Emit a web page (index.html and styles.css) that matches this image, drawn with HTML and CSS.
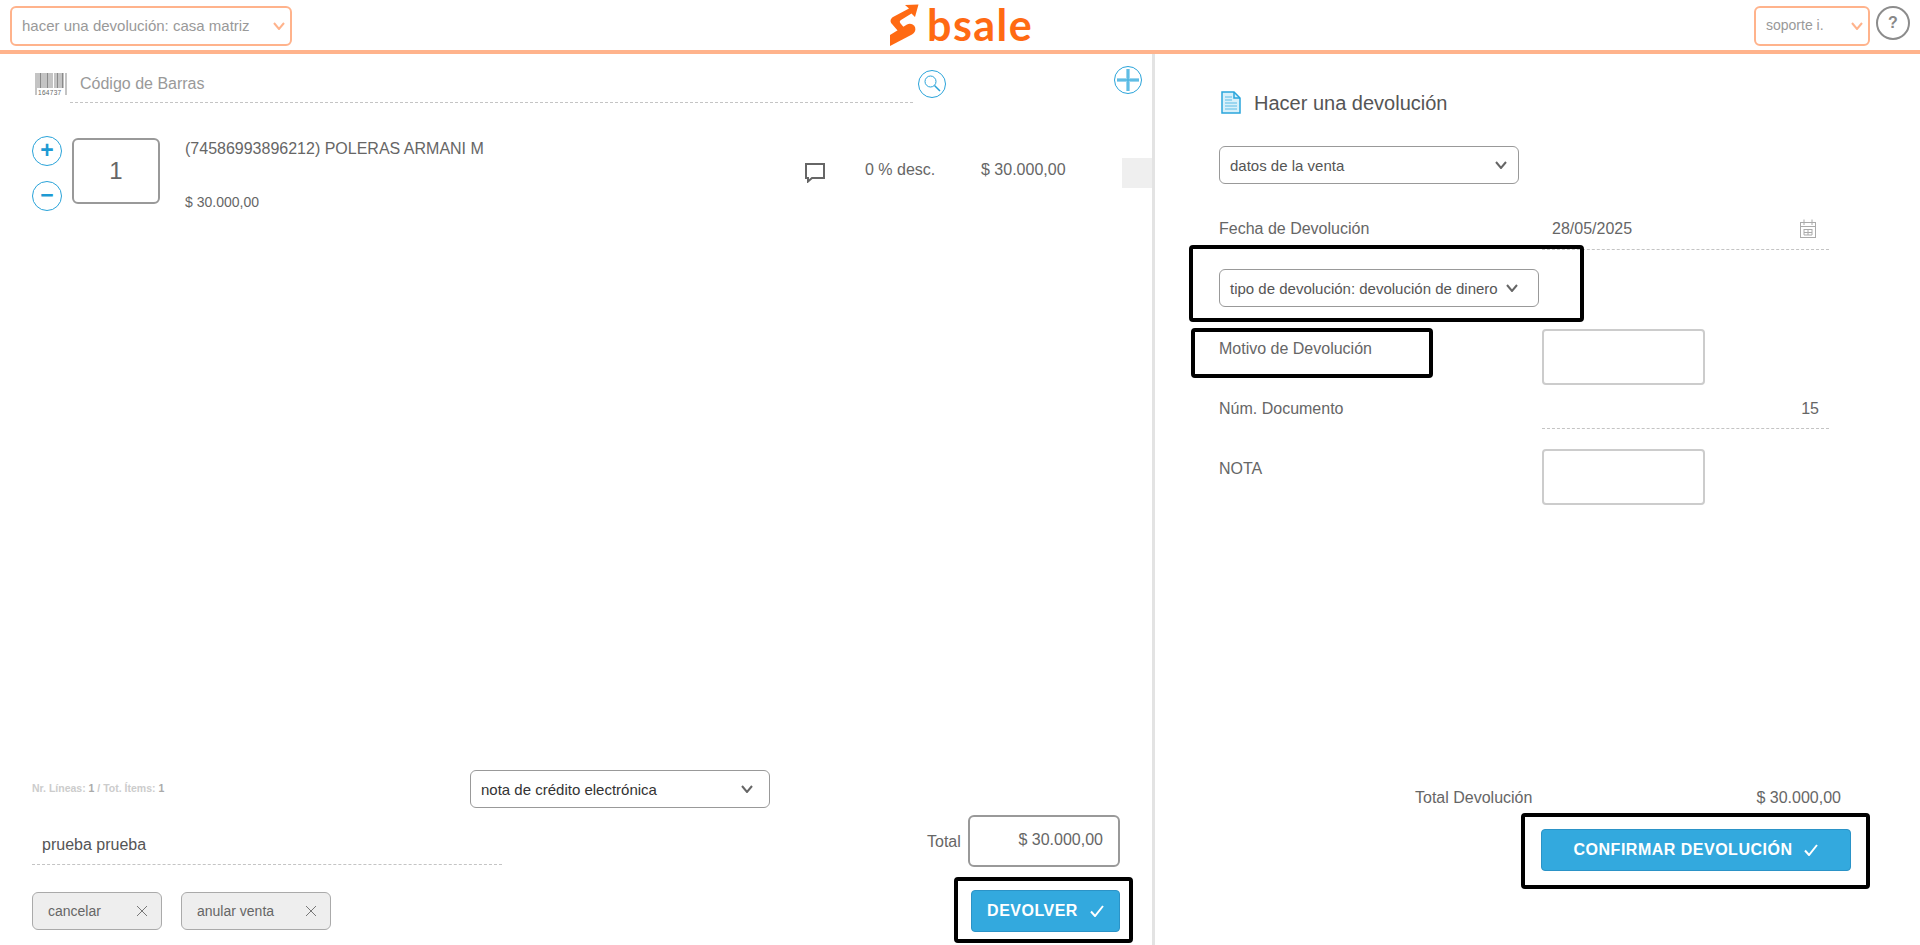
FILE: index.html
```html
<!DOCTYPE html>
<html lang="es">
<head>
<meta charset="utf-8">
<title>Hacer una devolución</title>
<link rel="stylesheet" href="styles.css">
</head>
<body>
<div class="app">
  <header class="topbar">
    <div class="pick pick-branch">
      <span class="pick-text">hacer una devolución: casa matriz</span>
      <svg class="chev" width="12" height="8" viewBox="0 0 12 8"><polyline points="1,1 6,7 11,1"/></svg>
    </div>
    <div class="logo">
      <svg class="logo-mark" width="29" height="42" viewBox="0 0 29 42"><path d="M15 1L28.5 .5 25 13 21.5 9.5 11 16C9 17 10 19 11 20L14 23.5 8 27 2 20C0 18 0 15 3 13L19 4.5Z"/><path d="M0 31L17 20.5C20 19 23 20 25 23C26 26 25 28.500 22 30.500L0 42Z"/></svg>
      <span class="logo-word">bsale</span>
    </div>
    <div class="top-right">
      <div class="pick pick-user">
        <span class="pick-text">soporte i.</span>
        <svg class="chev" width="12" height="8" viewBox="0 0 12 8"><polyline points="1,1 6,7 11,1"/></svg>
      </div>
      <div class="help">?</div>
    </div>
  </header>

  <main class="panes">
    <section class="left">
      <div class="scan">
        <svg class="barcode" width="31" height="22" viewBox="0 0 31 22">
          <g class="bars"><rect x="0" width="1" height="22"/><rect x="2" width="1" height="15"/><rect x="4" width="2" height="15"/><rect x="7" width="1" height="15"/><rect x="9" width="1" height="15"/><rect x="11" width="2" height="15"/><rect x="14" width="1" height="15"/><rect x="16" width="1" height="15"/><rect x="19" width="1" height="15"/><rect x="21" width="2" height="15"/><rect x="24" width="1" height="15"/><rect x="26" width="2" height="15"/><rect x="30" width="1" height="22"/></g>
          <text class="bar-num" x="2.500" y="21.500">164737</text>
        </svg>
        <div class="scan-field">Código de Barras</div>
        <svg class="icon-search" width="28" height="28" viewBox="0 0 28 28"><circle cx="14" cy="14" r="13.500"/><circle cx="12.500" cy="11.500" r="5.500"/><line x1="16.500" y1="15.500" x2="22" y2="21"/></svg>
        <svg class="icon-add" width="28" height="28" viewBox="0 0 28 28"><circle cx="14" cy="14" r="13.500"/><line class="glow" x1="3" y1="14" x2="25" y2="14"/><line class="glow" x1="14" y1="3" x2="14" y2="25"/><line x1="3" y1="14" x2="25" y2="14"/><line x1="14" y1="3" x2="14" y2="25"/></svg>
      </div>

      <div class="item">
        <div class="steppers">
          <div class="step">+</div>
          <div class="step">−</div>
        </div>
        <div class="qty">1</div>
        <div class="item-info">
          <div class="item-name">(74586993896212) POLERAS ARMANI M</div>
          <div class="item-price">$ 30.000,00</div>
        </div>
        <svg class="icon-note" width="20" height="20" viewBox="0 0 20 20"><path d="M1 1H19V15H7L3 18.500V15H1Z"/></svg>
        <div class="item-disc">0 % desc.</div>
        <div class="item-amount">$ 30.000,00</div>
        <div class="item-tail"></div>
      </div>

      <div class="left-foot">
        <div class="foot-row">
          <div class="meta">Nr. Líneas: <b>1</b> / Tot. Ítems: <b>1</b></div>
          <div class="sel sel-doc">
            <span>nota de crédito electrónica</span>
            <svg class="chev chev-dark" width="12" height="8" viewBox="0 0 12 8"><polyline points="1,1 6,7 11,1"/></svg>
          </div>
        </div>
        <div class="foot-row row-total">
          <div class="note-cell"><div class="note-field">prueba prueba</div></div>
          <div class="total-label">Total</div>
          <div class="total-box">$ 30.000,00</div>
        </div>
        <div class="foot-row row-actions">
          <div class="ghost ghost-cancel"><span>cancelar</span><svg class="icon-x" width="10" height="10" viewBox="0 0 10 10"><path d="M0 0L10 10M10 0L0 10"/></svg></div>
          <div class="ghost ghost-void"><span>anular venta</span><svg class="icon-x" width="10" height="10" viewBox="0 0 10 10"><path d="M0 0L10 10M10 0L0 10"/></svg></div>
          <div class="primary primary-return">DEVOLVER<svg class="icon-check" width="14" height="12" viewBox="0 0 14 12"><polyline points="1,6.500 5,11 13,1"/></svg></div>
        </div>
      </div>
    </section>

    <section class="right">
      <div class="title-row">
        <svg class="icon-doc" width="20" height="23" viewBox="0 0 20 23"><path class="doc-sheet" d="M1 1H13L19 7V22H1Z"/><path class="doc-fold" d="M13 1V7H19"/><path class="doc-lines" d="M4 6H11M4 9H11M4 12H16M4 15H16M4 18H16"/></svg>
        <h1 class="title">Hacer una devolución</h1>
      </div>
      <div class="sel sel-data">
        <span>datos de la venta</span>
        <svg class="chev chev-dark" width="12" height="8" viewBox="0 0 12 8"><polyline points="1,1 6,7 11,1"/></svg>
      </div>
      <div class="field field-date">
        <div class="field-label">Fecha de Devolución</div>
        <div class="field-value value-date">
          <span>28/05/2025</span>
          <svg class="icon-cal" width="16" height="19" viewBox="0 0 16 19"><rect x=".5" y="3.500" width="15" height="15"/><path d="M4 .5V6M12 .5V6M.5 7.500H15.500M4 10.500H12M4 13.500H12M4 10V16H12V10M8 10V16"/></svg>
        </div>
      </div>
      <div class="sel sel-type">
        <span>tipo de devolución: devolución de dinero</span>
        <svg class="chev chev-dark" width="12" height="8" viewBox="0 0 12 8"><polyline points="1,1 6,7 11,1"/></svg>
      </div>
      <div class="field field-box">
        <div class="field-label">Motivo de Devolución</div>
        <div class="text-box"></div>
      </div>
      <div class="field field-num">
        <div class="field-label">Núm. Documento</div>
        <div class="field-value value-num">15</div>
      </div>
      <div class="field field-box field-nota">
        <div class="field-label">NOTA</div>
        <div class="text-box"></div>
      </div>
      <div class="right-foot">
        <div class="sum-row"><span>Total Devolución</span><span>$ 30.000,00</span></div>
        <div class="primary primary-confirm">CONFIRMAR DEVOLUCIÓN<svg class="icon-check" width="14" height="12" viewBox="0 0 14 12"><polyline points="1,6.500 5,11 13,1"/></svg></div>
      </div>
    </section>
  </main>

  <div class="mark mark-type"></div>
  <div class="mark mark-reason"></div>
  <div class="mark mark-return"></div>
  <div class="mark mark-confirm"></div>
</div>
</body>
</html>
```

FILE: styles.css
```css
* { box-sizing: border-box; }
html, body { margin: 0; padding: 0; }
body {
  font-family: "Liberation Sans", Arial, sans-serif;
  font-size: 16px;
  color: #666;
  background: #fff;
}
.app { position: relative; width: 1920px; height: 945px; overflow: hidden; }

/* top bar */
.topbar {
  position: relative;
  height: 54px;
  border-bottom: 4px solid #ffb38c;
  display: flex;
  align-items: flex-start;
  justify-content: space-between;
  padding: 6px 10px 0;
}
.pick {
  height: 40px;
  border: 2px solid #ffb38c;
  border-radius: 6px;
  display: flex;
  align-items: center;
  justify-content: space-between;
  font-size: 15px;
  color: #999;
  padding: 0 5px 0 10px;
}
.pick-text { position: relative; top: -1px; }
.pick-branch { width: 282px; }
.pick-user { width: 116px; font-size: 14px; }
.chev { fill: none; stroke: #ffb38c; stroke-width: 2; flex: none; }
.chev-dark { stroke: #666; }
.top-right { display: flex; gap: 6px; }
.help {
  width: 34px;
  height: 34px;
  border: 2px solid #8c8c8c;
  border-radius: 50%;
  text-align: center;
  line-height: 29px;
  font-size: 16px;
  font-weight: bold;
  color: #888;
}
.logo { position: absolute; left: 890px; top: 4px; display: flex; align-items: flex-start; }
.logo-mark { fill: #ff6a13; }
.logo-word {
  margin-left: 8px;
  font-family: "Lato", sans-serif;
  font-weight: 700;
  font-size: 43px;
  line-height: 42px;
  letter-spacing: 1.5px;
  color: #ff6a13;
}

/* panes */
.panes { display: flex; height: 891px; }
.left {
  width: 1155px;
  border-right: 3px solid #e3e3e3;
  display: flex;
  flex-direction: column;
}
.right { flex: 1; display: flex; flex-direction: column; padding-left: 64px; }

/* scan row */
.scan { display: flex; align-items: flex-start; padding: 12px 10px 0 35px; }
.barcode { margin-top: 7px; flex: none; width: 32px; }
.bars { fill: #8a8a8a; }
.bar-num { font-size: 6.500px; fill: #666; letter-spacing: .3px; }
.scan-field {
  margin-left: 3px;
  width: 843px;
  height: 37px;
  border-bottom: 1px dashed #c4c4c4;
  padding: 8px 0 0 10px;
  line-height: 20px;
  color: #999;
}
.icon-search, .icon-add { flex: none; fill: none; stroke: #29a3d9; stroke-width: 1; }
.icon-search { margin: 4px 0 0 5px; }
.icon-search line { stroke-width: 1.5; }
.icon-add { margin-left: auto; }
.icon-add .glow { stroke: #9dd6ef; stroke-width: 4; }
.icon-add line { stroke: #4cb5e0; stroke-width: 1.5; }

/* item row */
.item { display: flex; align-items: flex-start; margin-top: 33px; padding-left: 32px; }
.steppers { display: flex; flex-direction: column; gap: 15px; }
.step {
  width: 30px;
  height: 30px;
  border: 1px solid #29a3d9;
  border-radius: 50%;
  text-align: center;
  font-size: 23px;
  font-weight: bold;
  line-height: 26px;
  color: #1e9ad3;
}
.qty {
  margin: 2px 0 0 10px;
  width: 88px;
  height: 66px;
  border: 2px solid #999;
  border-radius: 6px;
  text-align: center;
  font-size: 24px;
  line-height: 62px;
  color: #666;
}
.item-info { margin-left: 25px; width: 620px; flex: none; }
.item-name { margin-top: 4px; line-height: 18px; }
.item-price { margin-top: 35px; font-size: 14px; line-height: 18px; }
.icon-note { margin-top: 27px; flex: none; fill: none; stroke: #666; stroke-width: 2; }
.item-disc { margin: 25px 0 0 40px; width: 115px; flex: none; line-height: 18px; }
.item-amount { margin-top: 25px; width: 142px; flex: none; line-height: 18px; padding-left: 1px; }
.item-tail { margin-top: 22px; width: 30px; height: 30px; background: #efefef; flex: none; }

/* left footer */
.left-foot { margin-top: auto; padding: 0 32px 13px; }
.foot-row { display: flex; align-items: flex-start; }
.meta { width: 438px; padding-top: 12px; font-size: 10.5px; line-height: 12px; font-weight: bold; color: #ccc; }
.meta b { color: #aaa; }
.sel {
  height: 38px;
  border: 1px solid #999;
  border-radius: 6px;
  display: flex;
  align-items: center;
  justify-content: space-between;
  padding: 0 11px 0 10px;
  font-size: 15px;
  color: #555;
  background: #fff;
}
.sel-doc { width: 300px; color: #333; padding-right: 16px; }
.row-total { margin-top: 7px; height: 52px; }
.note-cell { width: 470px; flex: none; padding-top: 20px; }
.note-field {
  height: 30px;
  border-bottom: 1px dashed #c4c4c4;
  padding-left: 10px;
  line-height: 20px;
  color: #555;
}
.total-label { margin: 18px 0 0 425px; line-height: 18px; width: 41px; flex: none; }
.total-box {
  width: 152px;
  height: 52px;
  border: 2px solid #999;
  border-radius: 6px;
  text-align: right;
  padding: 14px 15px 0 0;
  line-height: 18px;
}
.row-actions { margin-top: 23px; }
.ghost {
  height: 38px;
  margin-top: 2px;
  border: 1px solid #aaa;
  border-radius: 6px;
  background: #eee;
  display: flex;
  align-items: center;
  justify-content: space-between;
  padding: 0 14px 0 15px;
  font-size: 14px;
}
.ghost-cancel { width: 130px; }
.ghost-void { width: 150px; margin-left: 19px; }
.icon-x { fill: none; stroke: #777; stroke-width: 1; flex: none; }
.primary {
  height: 42px;
  background: #33a9de;
  border: 1px solid #2b93c7;
  border-radius: 4px;
  display: flex;
  align-items: center;
  justify-content: center;
  gap: 12px;
  color: #fff;
  font-weight: bold;
  font-size: 16px;
  letter-spacing: .5px;
}
.primary-return { width: 149px; margin-left: auto; }
.icon-check { fill: none; stroke: #fff; stroke-width: 2; flex: none; }

/* right form */
.title-row { display: flex; align-items: flex-start; margin-top: 37px; }
.icon-doc { margin-left: 2px; flex: none; fill: none; }
.doc-sheet, .doc-fold { stroke: #2aa5dc; stroke-width: 1.5; }
.doc-sheet { fill: #d8f0fa; }
.doc-lines { stroke: #5bbce6; stroke-width: 1; }
.title { margin: 0 0 0 13px; font-size: 20px; font-weight: normal; line-height: 24px; color: #555; }
.sel-data { width: 300px; margin-top: 31px; }
.sel-type { width: 320px; margin-top: 19px; padding-right: 20px; }
.field { display: flex; align-items: flex-start; }
.field-label { width: 323px; flex: none; line-height: 20px; }
.field-date { margin-top: 26px; height: 40px; }
.field-date .field-label { margin-top: 9px; }
.field-value { width: 287px; border-bottom: 1px dashed #c4c4c4; }
.value-date {
  height: 40px;
  display: flex;
  justify-content: space-between;
  padding: 9px 13px 0 10px;
  line-height: 20px;
}
.icon-cal { fill: none; stroke: #aaa; stroke-width: 1; flex: none; }
.field-box { margin-top: 22px; }
.field-box .field-label { margin-top: 10px; }
.text-box { width: 163px; height: 56px; border: 2px solid #ccc; border-radius: 4px; }
.field-num { height: 45px; }
.field-num .field-label { margin-top: 14px; }
.value-num { height: 44px; padding: 14px 10px 0 0; text-align: right; line-height: 20px; }
.field-nota { margin-top: 19px; }
.right-foot { margin-top: auto; padding-bottom: 74px; position: relative; }
.sum-row {
  margin-left: 196px;
  width: 426px;
  display: flex;
  justify-content: space-between;
  line-height: 20px;
}
.primary-confirm { width: 310px; margin: 21px 0 0 322px; }

/* review annotations drawn over the screenshot */
.mark { position: absolute; border: 4px solid #000; border-radius: 4px; }
.mark-type { left: 1189px; top: 245px; width: 395px; height: 77px; }
.mark-reason { left: 1191px; top: 328px; width: 242px; height: 50px; }
.mark-return { left: 954px; top: 877px; width: 179px; height: 66px; }
.mark-confirm { left: 1521px; top: 813px; width: 349px; height: 76px; }
```
